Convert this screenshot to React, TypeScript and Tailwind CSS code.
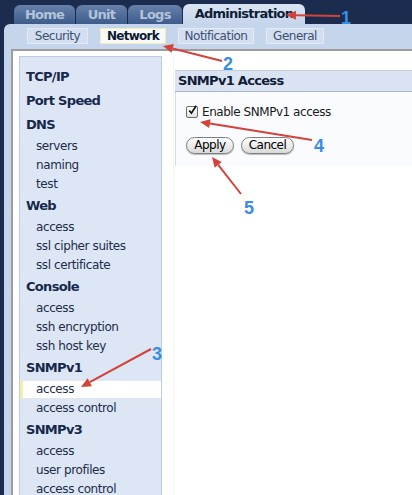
import React from 'react';

const NAV = [
  { title: 'TCP/IP', items: [] as string[] },
  { title: 'Port Speed', items: [] as string[] },
  { title: 'DNS', items: ['servers', 'naming', 'test'] },
  { title: 'Web', items: ['access', 'ssl cipher suites', 'ssl certificate'] },
  { title: 'Console', items: ['access', 'ssh encryption', 'ssh host key'] },
  { title: 'SNMPv1', items: ['access', 'access control'] },
  { title: 'SNMPv3', items: ['access', 'user profiles', 'access control'] },
];

const TABS = [
  { label: 'Home', w: 'w-[61px]' },
  { label: 'Unit', w: 'w-[51px]' },
  { label: 'Logs', w: 'w-[54px]' },
];

const SUBTABS = [
  { label: 'Security', w: 'w-[61px]' },
  { label: 'Network', w: 'w-[66px]', active: true },
  { label: 'Notification', w: 'w-[76px]' },
  { label: 'General', w: 'w-[58px]' },
];

// red callout arrows + blue step numbers
const ARROWS = [
  { from: [340, 16], to: [286, 15], n: '1', nx: 341, ny: 23.5 },
  { from: [222, 61], to: [163, 46], n: '2', nx: 223, ny: 70 },
  { from: [151, 349], to: [81, 387], n: '3', nx: 152, ny: 360 },
  { from: [312, 140], to: [200, 122], n: '4', nx: 314, ny: 151.5 },
  { from: [241, 194], to: [212, 157], n: '5', nx: 244, ny: 213.5 },
];

function Arrow({ from, to }: { from: number[]; to: number[] }) {
  const [x1, y1] = from;
  const [x2, y2] = to;
  const len = Math.hypot(x2 - x1, y2 - y1);
  const ux = (x2 - x1) / len;
  const uy = (y2 - y1) / len;
  const bx = x2 - ux * 10;
  const by = y2 - uy * 10;
  const pts = `${x2},${y2} ${bx - uy * 4.5},${by + ux * 4.5} ${bx + uy * 4.5},${by - ux * 4.5}`;
  return (
    <g>
      <line x1={x1} y1={y1} x2={bx} y2={by} stroke="#d2433a" strokeWidth={2} />
      <polygon points={pts} fill="#d2433a" />
    </g>
  );
}

export default function App() {
  return (
    <div className="relative w-[412px] h-[495px] overflow-hidden bg-[#1b2c4e] flex flex-col font-['DejaVu_Sans',sans-serif]">
      {/* Main tabs */}
      <div className="flex items-end pl-[14px] pt-[5px] gap-[1px] h-[24px]">
        {TABS.map((t) => (
          <div
            key={t.label}
            className={`${t.w} h-[19px] rounded-t-[6px] bg-linear-to-b from-[#6681aa] to-[#3d5c8b] text-center text-[13px] leading-[20px] font-bold text-[#b3c3da] tracking-[-0.75px]`}
          >
            {t.label}
          </div>
        ))}
        <div className="w-[122px] h-[20px] rounded-t-[6px] bg-linear-to-b from-[#dbe5f3] to-[#c5d5eb] text-center text-[13px] leading-[20px] font-bold text-[#0f1d36] tracking-[-0.75px]">
          Administration
        </div>
      </div>

      {/* Light panel */}
      <div className="ml-[4px] flex-1 flex flex-col rounded-tl-[6px] bg-[#c5d5eb]">
        <div className="flex pl-[23px] pt-[4px] gap-[12px]">
          {SUBTABS.map((s) => (
            <div
              key={s.label}
              className={`${s.w} h-[16px] text-center text-[12px] leading-[15px] border ${
                s.active
                  ? 'bg-[#f8f9fb] border-[#efedb8] font-bold text-[#0c1a33] tracking-[-0.7px]'
                  : 'bg-[#d3def0] border-[#e3eaf5] text-[#3b5173] tracking-[-0.5px]'
              }`}
            >
              {s.label}
            </div>
          ))}
        </div>

        {/* White content */}
        <div className="mt-[5px] ml-[7px] flex-1 flex bg-white border-l-2 border-t-2 border-[#9d9d9d] pl-[6px] pt-[5px]">
          <div className="w-[143px] shrink-0 border-x border-t border-[#bccbe3] bg-[#dde6f5] pt-[8px]">
            {NAV.map((g) => (
              <div key={g.title}>
                <div className="h-[24px] leading-[24px] pl-[6px] text-[13px] font-bold text-[#16284b] tracking-[-0.7px]">
                  {g.title}
                </div>
                {g.items.map((it) => {
                  const sel = g.title === 'SNMPv1' && it === 'access';
                  return (
                    <div
                      key={it}
                      className={
                        sel
                          ? 'h-[19px] leading-[17px] pl-[13px] text-[12px] tracking-[-0.4px] text-[#1c2c4a] bg-white border-l-[3px] border-l-[#f3efa6] border-y border-y-[#e2e6ee]'
                          : 'h-[19px] leading-[19px] pl-[16px] text-[12px] tracking-[-0.4px] text-[#1c2c4a]'
                      }
                    >
                      {it}
                    </div>
                  );
                })}
              </div>
            ))}
          </div>

          <div className="flex-1 ml-[11px] pl-[1px] pt-[14px] border-l border-[#f3f4f6]">
            <div className="h-[22px] bg-[#dae3f2] border-t border-[#c6cfdd] border-b border-b-[#a9b5c9] pl-[3px] text-[13px] leading-[20px] font-bold text-[#0f1d36] tracking-[-0.7px]">
              SNMPv1 Access
            </div>
            <div className="h-[74px] bg-[#f9fbfe] border-l border-[#d6dce6] pl-[10px] pt-[14px]">
              <div className="flex items-center h-[12px] gap-[4px]">
                <div className="w-[12px] h-[12px] rounded-[2px] border border-[#6b6b6b] bg-linear-to-b from-white to-[#e2e2e2] flex items-center justify-center">
                  <svg width="11" height="12" viewBox="0 0 11 12" className="-mt-[4px] ml-[1px]">
                    <path d="M1.5 6.5 L4.2 9.8 L10 0.8" fill="none" stroke="#111" strokeWidth="2" />
                  </svg>
                </div>
                <span className="text-[12px] tracking-[-0.45px] text-[#1a1a1a]">Enable SNMPv1 access</span>
              </div>
              <div className="flex gap-[7px] mt-[19px]">
                <div className="w-[48px] h-[17px] rounded-full border border-[#7f7f7f] bg-linear-to-b from-white to-[#d9d9d9] shadow-[0_1px_1px_rgba(0,0,0,0.25)] text-center text-[12px] tracking-[-0.5px] leading-[15px] text-black">
                  Apply
                </div>
                <div className="w-[53px] h-[17px] rounded-full border border-[#7f7f7f] bg-linear-to-b from-white to-[#d9d9d9] shadow-[0_1px_1px_rgba(0,0,0,0.25)] text-center text-[12px] tracking-[-0.5px] leading-[15px] text-black">
                  Cancel
                </div>
              </div>
            </div>
          </div>
        </div>
      </div>

      {/* Callout overlay */}
      <svg className="absolute inset-0 pointer-events-none" width="412" height="495">
        {ARROWS.map((a) => (
          <g key={a.n}>
            <Arrow from={a.from} to={a.to} />
            <text
              x={a.nx}
              y={a.ny}
              fill="#3a8de6"
              fontSize="18"
              fontWeight="bold"
              fontFamily="'Liberation Sans', Arial, sans-serif"
            >
              {a.n}
            </text>
          </g>
        ))}
      </svg>
    </div>
  );
}
